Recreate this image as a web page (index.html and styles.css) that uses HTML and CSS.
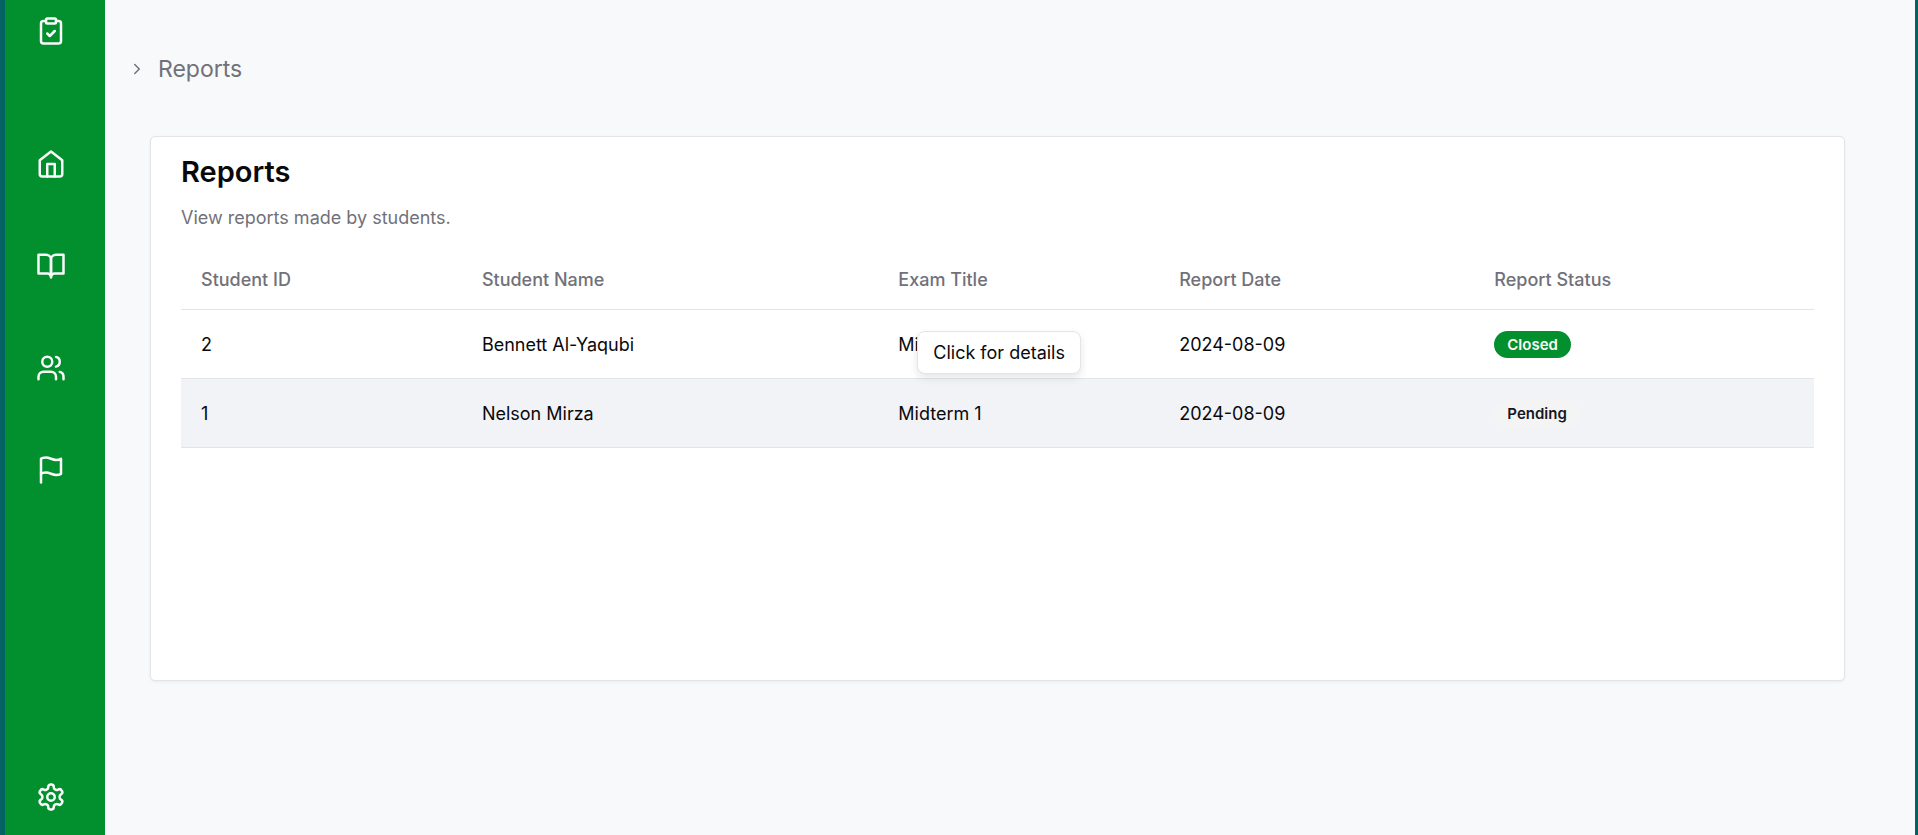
FILE: index.html
```html
<!DOCTYPE html>
<html lang="en">
<head>
<meta charset="utf-8">
<meta name="viewport" content="width=device-width, initial-scale=1">
<title>Reports</title>
<link rel="stylesheet" href="styles.css">
</head>
<body class="app">
<aside class="sidebar">
  <nav class="nav" aria-label="Main">
    <a class="nav-link nav-brand" href="#" aria-label="Exams">
      <svg class="icon" viewBox="0 0 24 24"><rect x="8" y="2" width="8" height="4" rx="1"/><path d="M16 4h2a2 2 0 0 1 2 2v14a2 2 0 0 1-2 2H6a2 2 0 0 1-2-2V6a2 2 0 0 1 2-2h2"/><path d="m9 14 2 2 4-4"/></svg>
    </a>
    <a class="nav-link" href="#" aria-label="Home">
      <svg class="icon" viewBox="0 0 24 24"><path d="m3 9 9-7 9 7v11a2 2 0 0 1-2 2H5a2 2 0 0 1-2-2z"/><path d="M9 22V12h6v10"/></svg>
    </a>
    <a class="nav-link" href="#" aria-label="Courses">
      <svg class="icon" viewBox="0 0 24 24"><path d="M2 3h6a4 4 0 0 1 4 4v14a3 3 0 0 0-3-3H2z"/><path d="M22 3h-6a4 4 0 0 0-4 4v14a3 3 0 0 1 3-3h7z"/></svg>
    </a>
    <a class="nav-link" href="#" aria-label="Students">
      <svg class="icon" viewBox="0 0 24 24"><path d="M16 21v-2a4 4 0 0 0-4-4H6a4 4 0 0 0-4 4v2"/><circle cx="9" cy="7" r="4"/><path d="M22 21v-2a4 4 0 0 0-3-3.87"/><path d="M16 3.13a4 4 0 0 1 0 7.75"/></svg>
    </a>
    <a class="nav-link" href="#" aria-label="Reports" aria-current="page">
      <svg class="icon" viewBox="0 0 24 24"><path d="M4 15s1-1 4-1 5 2 8 2 4-1 4-1V3s-1 1-4 1-5-2-8-2-4 1-4 1z"/><path d="M4 22v-7"/></svg>
    </a>
  </nav>
  <a class="nav-link" href="#" aria-label="Settings">
    <svg class="icon" viewBox="0 0 24 24"><path d="M12.22 2h-.44a2 2 0 0 0-2 2v.18a2 2 0 0 1-1 1.73l-.43.25a2 2 0 0 1-2 0l-.15-.08a2 2 0 0 0-2.73.73l-.22.38a2 2 0 0 0 .73 2.73l.15.1a2 2 0 0 1 1 1.72v.51a2 2 0 0 1-1 1.74l-.15.09a2 2 0 0 0-.73 2.73l.22.38a2 2 0 0 0 2.73.73l.15-.08a2 2 0 0 1 2 0l.43.25a2 2 0 0 1 1 1.73V20a2 2 0 0 0 2 2h.44a2 2 0 0 0 2-2v-.18a2 2 0 0 1 1-1.73l.43-.25a2 2 0 0 1 2 0l.15.08a2 2 0 0 0 2.73-.73l.22-.39a2 2 0 0 0-.73-2.73l-.15-.08a2 2 0 0 1-1-1.74v-.5a2 2 0 0 1 1-1.74l.15-.09a2 2 0 0 0 .73-2.73l-.22-.38a2 2 0 0 0-2.73-.73l-.15.08a2 2 0 0 1-2 0l-.43-.25a2 2 0 0 1-1-1.73V4a2 2 0 0 0-2-2z"/><circle cx="12" cy="12" r="3"/></svg>
  </a>
</aside>
<main class="main">
  <nav class="breadcrumb" aria-label="Breadcrumb">
    <svg class="chevron" viewBox="0 0 24 24"><path d="m9 18 6-6-6-6"/></svg>
    <a class="crumb" href="#">Reports</a>
  </nav>
  <section class="card">
    <h1 class="card-title">Reports</h1>
    <p class="card-text">View reports made by students.</p>
    <table class="table">
      <thead>
        <tr>
          <th class="col-id" scope="col">Student ID</th>
          <th class="col-name" scope="col">Student Name</th>
          <th class="col-exam" scope="col">Exam Title</th>
          <th class="col-date" scope="col">Report Date</th>
          <th class="col-status" scope="col">Report Status</th>
        </tr>
      </thead>
      <tbody>
        <tr>
          <td>2</td>
          <td>Bennett Al-Yaqubi</td>
          <td class="exam-cell">Midterm 1<span class="tooltip" role="tooltip">Click for details</span></td>
          <td>2024-08-09</td>
          <td><span class="badge badge-closed">Closed</span></td>
        </tr>
        <tr class="row-active">
          <td>1</td>
          <td>Nelson Mirza</td>
          <td>Midterm 1</td>
          <td>2024-08-09</td>
          <td><span class="badge badge-pending">Pending</span></td>
        </tr>
      </tbody>
    </table>
  </section>
</main>
</body>
</html>
```
FILE: styles.css
```css
*, *::before, *::after { box-sizing: border-box; }

.app {
  margin: 0;
  min-height: 100vh;
  display: flex;
  border-left: 5px solid #046265;
  border-right: 3px solid #046264;
  background: #f8f9fb;
  color: #09090b;
  font-family: Inter, "Liberation Sans", sans-serif;
  font-size: 18px;
  line-height: 25px;
}

.sidebar {
  flex: none;
  width: 100px;
  padding: 1px 0 8px;
  display: flex;
  flex-direction: column;
  justify-content: space-between;
  align-items: center;
  background: #028f2e;
}
.nav { display: flex; flex-direction: column; gap: 42px; }
.nav-link {
  display: flex;
  align-items: center;
  justify-content: center;
  width: 60px;
  height: 60px;
  margin-right: 8px;
  color: #fafafa;
}
.nav-brand { margin-bottom: 31px; }
.icon, .chevron {
  fill: none;
  stroke: currentColor;
  stroke-width: 2;
  stroke-linecap: round;
  stroke-linejoin: round;
}
.icon { width: 30px; height: 30px; }

.main { flex: 1; padding: 54px 70px 40px 23px; }
.breadcrumb {
  display: flex;
  align-items: center;
  gap: 12px;
  color: #71717a;
}
.chevron { width: 18px; height: 18px; }
.crumb {
  color: inherit;
  font-size: 23px;
  line-height: 30px;
  text-decoration: none;
}

.card {
  min-height: 545px;
  margin: 52px 0 0 22px;
  padding: 20px 30px;
  border: 1px solid #e2e4e9;
  border-radius: 5px;
  background: #fff;
  box-shadow: 0 1px 3px rgba(0, 0, 0, .06);
}
.card-title {
  margin: 0;
  font-size: 29px;
  font-weight: 600;
  line-height: 30px;
}
.card-text { margin: 18px 0; color: #71717a; }

.table { width: 100%; border-collapse: collapse; table-layout: fixed; }
.table th, .table td {
  padding: 2px 20px 0;
  border-bottom: 1px solid #e2e4e9;
  text-align: left;
}
.table th { height: 61px; color: #71717a; font-weight: 500; }
.table td { height: 69px; }
.col-id, .col-exam { width: 17.2%; }
.col-name { width: 25.5%; }
.col-date { width: 19.3%; }
.row-active { background: #f2f3f7; }

.badge {
  display: inline-block;
  padding: 1px 13px;
  border-radius: 14px;
  font-size: 15px;
  font-weight: 600;
}
.badge-closed { background: #028f2e; color: #fafafa; }
.badge-pending { background: #f4f4f5; color: #18181b; }

.exam-cell { position: relative; }
.tooltip {
  position: absolute;
  top: 21px;
  left: 39px;
  z-index: 1;
  padding: 8px 15px;
  border: 1px solid #e4e4e7;
  border-radius: 8px;
  background: #fff;
  box-shadow: 0 4px 8px rgba(0, 0, 0, .1);
  white-space: nowrap;
}
```
